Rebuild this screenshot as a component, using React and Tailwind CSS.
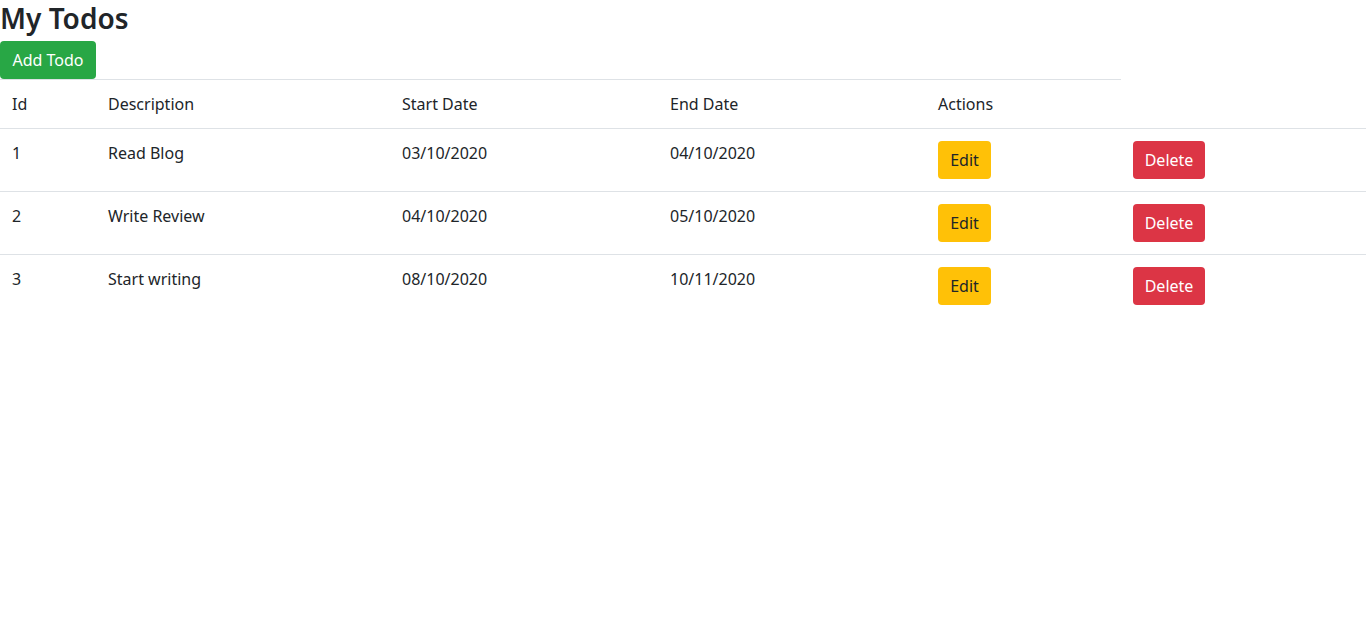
const todos = [
  { id: 1, description: 'Read Blog', start: '03/10/2020', end: '04/10/2020' },
  { id: 2, description: 'Write Review', start: '04/10/2020', end: '05/10/2020' },
  { id: 3, description: 'Start writing', start: '08/10/2020', end: '10/11/2020' },
];

const TodoRow = ({ todo }) => {
  return (
    <tr>
      <td className="px-3 pt-3 pb-3 align-top border-t border-[#dee2e6]">{todo.id}</td>
      <td className="px-3 pt-3 pb-3 align-top border-t border-[#dee2e6]">{todo.description}</td>
      <td className="px-3 pt-3 pb-3 align-top border-t border-[#dee2e6]">{todo.start}</td>
      <td className="px-3 pt-3 pb-3 align-top border-t border-[#dee2e6]">{todo.end}</td>
      <td className="px-3 pt-3 pb-3 align-top border-t border-[#dee2e6]">
        <button className="h-[38px] w-[53px] rounded bg-[#ffc107] text-[#212529] leading-6">Edit</button>
      </td>
      <td className="px-3 pt-3 pb-3 align-top border-t border-[#dee2e6]">
        <button className="h-[38px] w-[72px] rounded bg-[#dc3545] text-white leading-6">Delete</button>
      </td>
    </tr>
  );
};

const App = () => {
  return (
    <div className="min-h-screen bg-white text-[#212529] text-base leading-6 font-['Noto_Sans',sans-serif]">
      <h3 className="mb-[5px] text-[28px] leading-9 font-semibold">My Todos</h3>
      <button className="h-[38px] w-[96px] rounded bg-[#28a745] text-white leading-6">Add Todo</button>
      <table className="w-full border-collapse table-fixed">
        <colgroup>
          <col className="w-[96px]" />
          <col className="w-[294px]" />
          <col className="w-[268px]" />
          <col className="w-[268px]" />
          <col className="w-[195px]" />
          <col />
        </colgroup>
        <thead>
          <tr>
            <th className="px-3 py-3 text-left font-normal align-bottom border-t border-[#dee2e6]">Id</th>
            <th className="px-3 py-3 text-left font-normal align-bottom border-t border-[#dee2e6]">Description</th>
            <th className="px-3 py-3 text-left font-normal align-bottom border-t border-[#dee2e6]">Start Date</th>
            <th className="px-3 py-3 text-left font-normal align-bottom border-t border-[#dee2e6]">End Date</th>
            <th className="px-3 py-3 text-left font-normal align-bottom border-t border-[#dee2e6]">Actions</th>
          </tr>
        </thead>
        <tbody>
          {todos.map((todo) => (
            <TodoRow key={todo.id} todo={todo} />
          ))}
        </tbody>
      </table>
    </div>
  );
};

export default App;
